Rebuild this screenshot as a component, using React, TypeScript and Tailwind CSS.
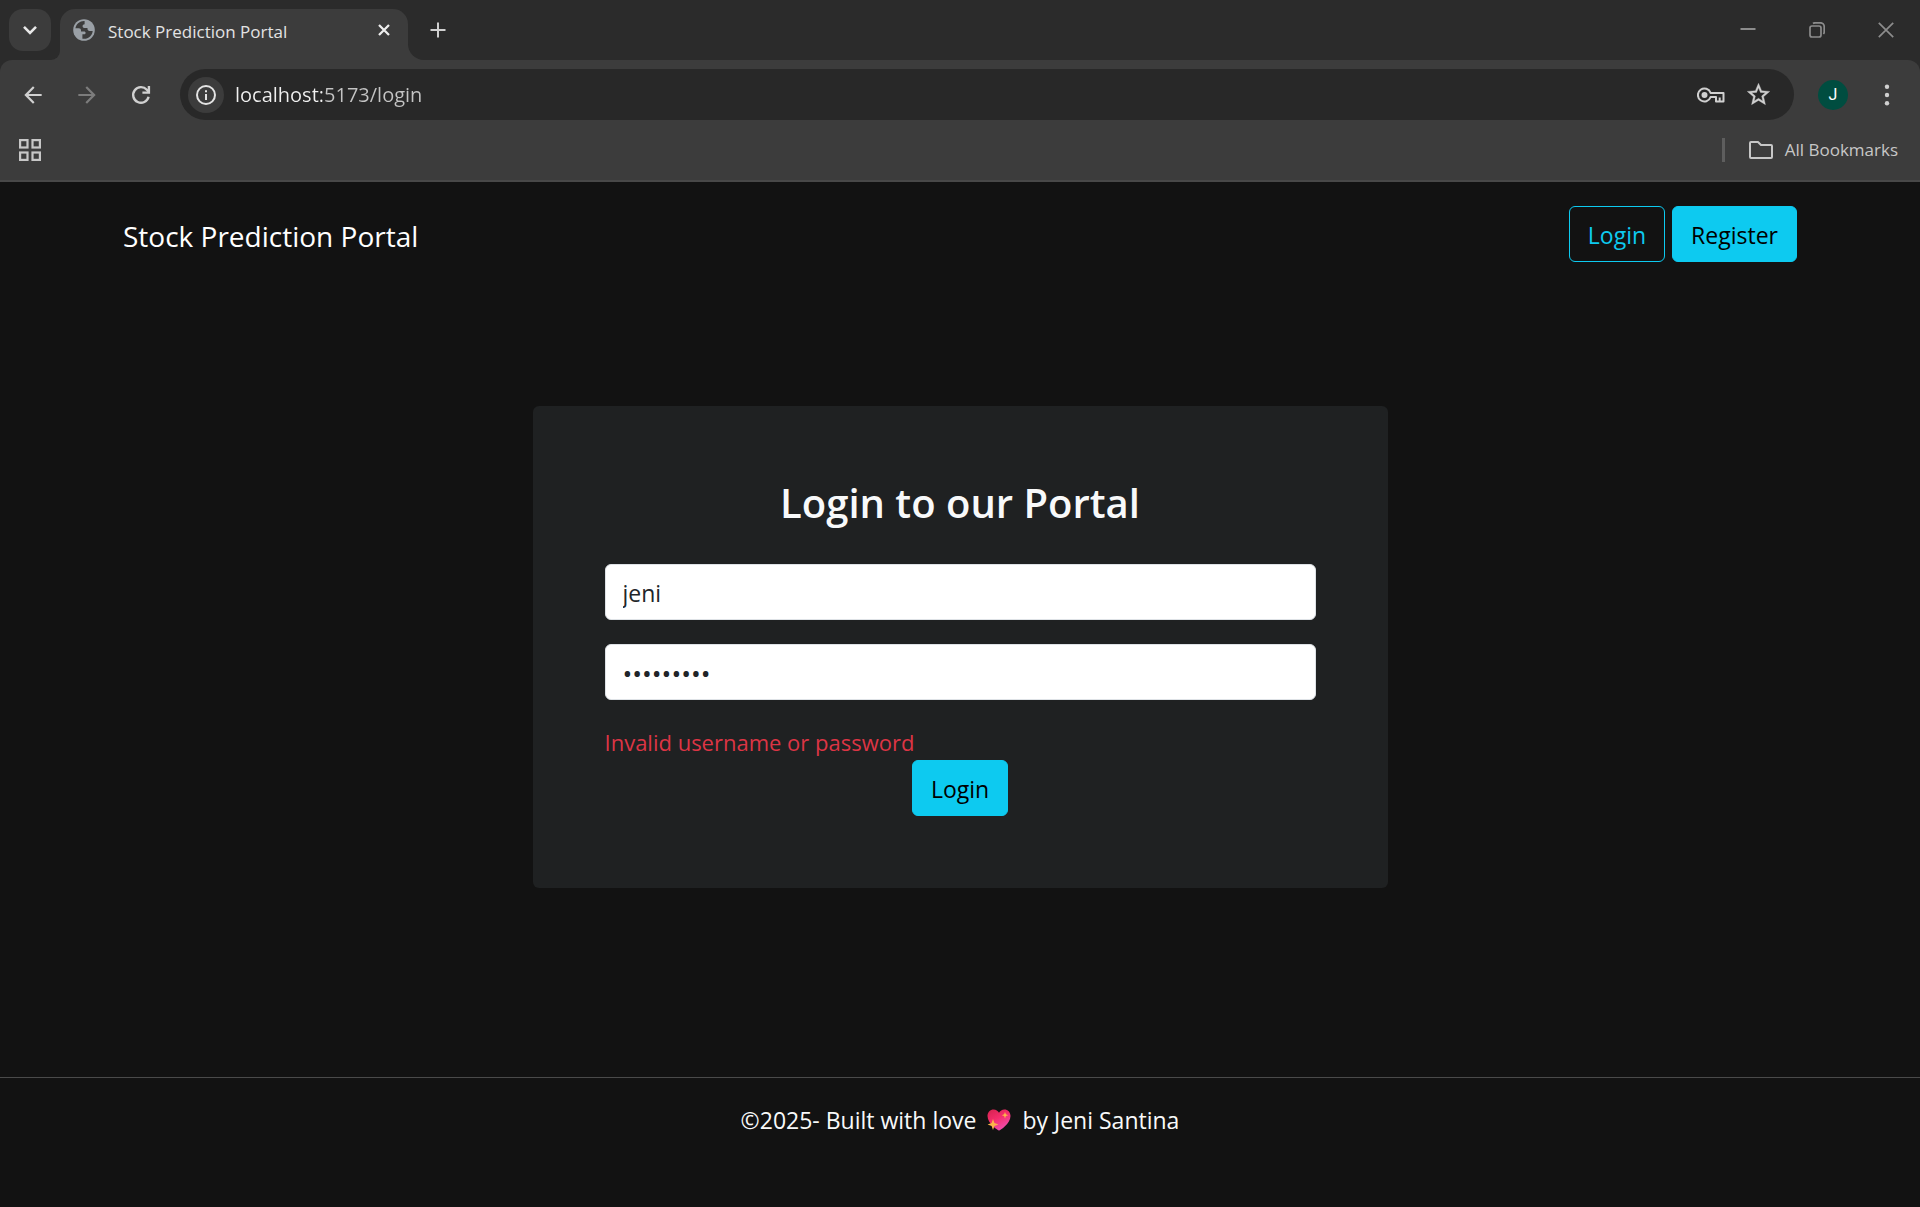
import React from "react";

type IconProps = { className?: string };

function ChevronDownIcon({ className }: IconProps) {
  return (
    <svg viewBox="0 0 24 24" className={className} fill="none" stroke="currentColor" strokeWidth="2.6">
      <path d="M6 8.8l6 6 6-6" />
    </svg>
  );
}

function GlobeIcon({ className }: IconProps) {
  return (
    <svg viewBox="0 0 22 22" className={className}>
      <circle cx="11" cy="11" r="10.8" fill="#9aa0a6" />
      <path
        d="M11.6 2c-4.500-.3-8.300 2.700-9.200 7.200h3.400c1.400 0 2.200.8 2.200 2v1.200h3.200c.9 0 1.400.6 1.400 1.400 0 1-.7 1.500-1.600 1.500H9.400v4.400c5.400 1 10-2.900 10.300-7.700h-3.300c-1.100 0-1.900-.8-1.900-1.900V8.900h-3.200c-1 0-1.700-.7-1.700-1.700 0-1.200.9-1.900 2-1.900V2z"
        fill="#3c3c3c"
      />
    </svg>
  );
}

function CloseIcon({ className }: IconProps) {
  return (
    <svg viewBox="0 0 24 24" className={className} fill="none" stroke="currentColor" strokeWidth="3.4">
      <path d="M4.500 4.500l15 15M19.500 4.500l-15 15" />
    </svg>
  );
}

function PlusIcon({ className }: IconProps) {
  return (
    <svg viewBox="0 0 16 16" className={className} fill="none" stroke="currentColor" strokeWidth="2">
      <path d="M8 0.500v15M0.500 8h15" />
    </svg>
  );
}

function MinimizeIcon({ className }: IconProps) {
  return (
    <svg viewBox="0 0 16 16" className={className} stroke="currentColor" strokeWidth="2">
      <path d="M0.500 7h15" />
    </svg>
  );
}

function RestoreIcon({ className }: IconProps) {
  return (
    <svg viewBox="0 0 16 16" className={className} fill="none" stroke="currentColor" strokeWidth="1.700">
      <rect x="1" y="4" width="11" height="11" rx="2" />
      <path d="M4 1.500c.6-.5 1.200-.7 2-.7h5.500a3.700 3.700 0 0 1 3.700 3.700V10c0 .8-.3 1.500-.8 2" />
    </svg>
  );
}

function WindowCloseIcon({ className }: IconProps) {
  return (
    <svg viewBox="0 0 16 16" className={className} fill="none" stroke="currentColor" strokeWidth="1.700">
      <path d="M.8.8l14.400 14.400M15.200.8L.8 15.200" />
    </svg>
  );
}

function ArrowIcon({ className }: IconProps) {
  return (
    <svg viewBox="0 0 24 24" className={className} fill="currentColor">
      <path d="M20 11H7.830l5.590-5.590L12 4l-8 8 8 8 1.410-1.410L7.830 13H20v-2z" />
    </svg>
  );
}

function ReloadIcon({ className }: IconProps) {
  return (
    <svg viewBox="0 0 24 24" className={className} fill="none" stroke="currentColor" strokeWidth="2.200">
      <path d="M19 13.600A7.200 7.200 0 1 1 17.400 7.200L18.800 8.800" />
      <path d="M19.300 3.800v6h-6" />
    </svg>
  );
}

function InfoIcon({ className }: IconProps) {
  return (
    <svg viewBox="0 0 20 20" className={className} fill="none" stroke="currentColor" strokeWidth="2">
      <circle cx="10" cy="10" r="9" />
      <path d="M10 9v6M10 5.200v2" />
    </svg>
  );
}

function KeyIcon({ className }: IconProps) {
  return (
    <svg viewBox="0 0 28 16" className={className} fill="none" stroke="currentColor" strokeWidth="2">
      <path d="M13.600 6A6.500 6.500 0 1 0 13.600 10H19v4.500h7.500V6z" strokeLinejoin="round" />
      <path d="M22.700 10.500v3.500" />
      <circle cx="7.500" cy="8" r="3" fill="currentColor" stroke="none" />
    </svg>
  );
}

function StarIcon({ className }: IconProps) {
  return (
    <svg viewBox="0 0 24 24" className={className} fill="currentColor" stroke="currentColor" strokeWidth="0.300">
      <path d="M22 9.240l-7.190-.62L12 2 9.190 8.630 2 9.240l5.460 4.730L5.820 21 12 17.270 18.180 21l-1.630-7.030L22 9.240zM12 15.400l-3.760 2.270 1-4.280-3.320-2.880 4.380-.38L12 6.100l1.710 4.040 4.380.38-3.320 2.880 1 4.280L12 15.400z" />
    </svg>
  );
}

function MoreIcon({ className }: IconProps) {
  return (
    <svg viewBox="0 0 24 24" className={className} fill="currentColor">
      <circle cx="12" cy="3.800" r="2.200" />
      <circle cx="12" cy="12" r="2.200" />
      <circle cx="12" cy="20.200" r="2.200" />
    </svg>
  );
}

function AppsIcon({ className }: IconProps) {
  return (
    <svg viewBox="0 0 22 22" className={className} fill="none" stroke="currentColor" strokeWidth="2.200">
      <rect x="1.100" y="1.100" width="7.400" height="7.400" />
      <rect x="13.500" y="1.100" width="7.400" height="7.400" />
      <rect x="1.100" y="13.500" width="7.400" height="7.400" />
      <rect x="13.500" y="13.500" width="7.400" height="7.400" />
    </svg>
  );
}

function FolderIcon({ className }: IconProps) {
  return (
    <svg viewBox="0 0 24 18" className={className} fill="none" stroke="currentColor" strokeWidth="2" strokeLinejoin="round">
      <path d="M1 2a1 1 0 0 1 1-1h7l3 3h10a1 1 0 0 1 1 1v11a1 1 0 0 1-1 1H2a1 1 0 0 1-1-1z" />
    </svg>
  );
}

function SparklingHeart({ className }: IconProps) {
  return (
    <svg viewBox="0 0 24 22" className={className} role="img" aria-label="sparkling heart">
      <defs>
        <linearGradient id="heart" x1="0" y1="0" x2="0.600" y2="1">
          <stop offset="0" stopColor="#d4224e" />
          <stop offset="0.500" stopColor="#f52d6c" />
          <stop offset="1" stopColor="#f04fb0" />
        </linearGradient>
      </defs>
      <path
        d="M12 21.500c-1 0-11.500-7-11.500-14.500C.5 3.200 3.300.5 6.600.5 9 .5 11 1.800 12 3.700 13 1.800 15 .5 17.400.5c3.300 0 6.100 2.700 6.100 6.500C23.500 14.500 13 21.500 12 21.500z"
        fill="url(#heart)"
      />
      <path d="M6 10l1.400 4 4 1.500-4 1.500L6 21l-1.400-4-4-1.500 4-1.500z" fill="#fcb34a" />
      <path d="M18 3l.9 2.300 2.300.9-2.300.9L18 9.400l-.9-2.300-2.300-.9 2.300-.9z" fill="#fcb34a" />
    </svg>
  );
}

function TabStrip() {
  return (
    <div className="flex h-[60px] items-start bg-[#2b2b2b] px-[9px] pt-[9px]">
      <button
        aria-label="Search tabs"
        className="flex size-[42px] items-center justify-center rounded-[14px] bg-[#3c3c3c] text-[#e8e8e8]"
      >
        <ChevronDownIcon className="size-6" />
      </button>
      <div className="flex h-[51px] items-end">
        <div className="h-4 w-[9px] overflow-hidden bg-[#3c3c3c]">
          <div className="h-4 rounded-br-2xl bg-[#2b2b2b]" />
        </div>
        <div className="flex h-[51px] w-[348px] items-start rounded-t-[15px] bg-[#3c3c3c] px-[13px]">
          <GlobeIcon className="mt-[10px] size-[22px]" />
          <span className="mt-[11px] ml-[13px] flex-1 text-[17px] leading-6 text-[#e3e3e3]">Stock Prediction Portal</span>
          <button aria-label="Close tab" className="mt-[13px] mr-[3px] text-[#eeeeee]">
            <CloseIcon className="size-4" />
          </button>
        </div>
        <div className="h-4 w-4 overflow-hidden bg-[#3c3c3c]">
          <div className="h-4 rounded-bl-2xl bg-[#2b2b2b]" />
        </div>
      </div>
      <button aria-label="New tab" className="mt-[13px] ml-[6px] text-[#d0d0d0]">
        <PlusIcon className="size-4" />
      </button>
      <div className="mt-[13px] mr-[17px] ml-auto flex gap-[53px] text-[#8c8c8c]">
        <button aria-label="Minimize">
          <MinimizeIcon className="size-4" />
        </button>
        <button aria-label="Restore">
          <RestoreIcon className="size-4" />
        </button>
        <button aria-label="Close window">
          <WindowCloseIcon className="size-4" />
        </button>
      </div>
    </div>
  );
}

function Toolbar() {
  return (
    <div className="bg-[#2b2b2b]">
      <div className="flex h-[69px] items-center rounded-t-xl bg-[#3c3c3c] pr-[21px] pl-5 text-[#d0d0d0]">
        <div className="flex items-center gap-7">
          <button aria-label="Back">
            <ArrowIcon className="size-[26px]" />
          </button>
          <button aria-label="Forward" disabled className="text-[#7c7c7c]">
            <ArrowIcon className="size-[26px] rotate-180" />
          </button>
          <button aria-label="Reload">
            <ReloadIcon className="size-[26px]" />
          </button>
        </div>
        <div className="ml-[26px] flex h-[51px] flex-1 items-center rounded-full bg-[#282828] pr-[22px] pl-2">
          <button
            aria-label="Site information"
            className="flex size-9 items-center justify-center rounded-full bg-[#3c3c3c] text-[#e3e3e3]"
          >
            <InfoIcon className="size-5" />
          </button>
          {/* The host part of the address is brighter than the rest */}
          <input
            aria-label="Address"
            defaultValue="localhost:5173/login"
            className="ml-[11px] min-w-0 flex-1 bg-[linear-gradient(90deg,#f1f1f1_87px,#c4c4c4_87px)] bg-clip-text text-[20px] leading-7 text-transparent outline-none"
          />
          <button aria-label="Saved passwords">
            <KeyIcon className="h-4 w-7" />
          </button>
          <button aria-label="Bookmark this page" className="ml-5">
            <StarIcon className="size-[27px]" />
          </button>
        </div>
        <button
          aria-label="Profile"
          className="ml-6 flex size-[30px] items-center justify-center rounded-full bg-[#004d40] font-[Roboto,sans-serif] text-[16px] text-white"
        >
          J
        </button>
        <button aria-label="Menu" className="ml-[27px]">
          <MoreIcon className="size-6" />
        </button>
      </div>
    </div>
  );
}

function BookmarksBar() {
  return (
    <div className="flex h-[53px] items-center border-b-2 border-[#484848] bg-[#3c3c3c] pr-[22px] pb-[10px] pl-[19px] text-[#c7c7c7]">
      <button aria-label="Apps">
        <AppsIcon className="size-[22px]" />
      </button>
      <div className="ml-auto flex items-center">
        <div className="h-6 w-[3px] bg-[#5e5e5e]" />
        <button className="ml-6 flex items-center gap-3 text-[17px] leading-6">
          <FolderIcon className="h-[18px] w-6" />
          All Bookmarks
        </button>
      </div>
    </div>
  );
}

export default function App() {
  return (
    <div className="flex min-h-screen flex-col bg-[#121212] font-['Open_Sans','Noto_Sans',sans-serif] text-[23px] leading-9 text-[#f8f9fa]">
      <header>
        <TabStrip />
        <Toolbar />
        <BookmarksBar />
      </header>
      <nav className="mx-auto flex w-full max-w-[1710px] items-center justify-between px-[18px] py-6">
        <a href="#home" className="pt-1 text-[28px] text-white">
          Stock Prediction Portal
        </a>
        <div className="flex gap-[7px]">
          <a href="#login" className="rounded-md border border-[#0dcaf0] px-[18px] pt-[10px] pb-2 text-[#0dcaf0]">
            Login
          </a>
          <a
            href="#register"
            className="rounded-md border border-[#0dcaf0] bg-[#0dcaf0] px-[18px] pt-[10px] pb-2 text-black"
          >
            Register
          </a>
        </div>
      </nav>
      <main className="mx-auto w-full max-w-[1710px] flex-1 pt-[120px] pb-24">
        <div className="mx-auto w-1/2 rounded-md bg-[#1f2122] p-18">
          <h3 className="mb-9 text-center text-[40px] leading-[50px] font-semibold">Login to our Portal</h3>
          <form>
            <input
              aria-label="Username"
              defaultValue="jeni"
              className="mb-6 block h-14 w-full rounded-md border border-[#dee2e6] bg-white px-[17px] pt-[2px] text-[#212529]"
            />
            <input
              aria-label="Password"
              type="password"
              defaultValue="jenipass1"
              className="mb-6 block h-14 w-full rounded-md border border-[#dee2e6] bg-white px-[17px] pt-[2px] text-[26px] text-[#212529]"
            />
            <div className="text-[22px] text-[#dc3545]">Invalid username or password</div>
            <button
              type="button"
              className="mx-auto block rounded-md border border-[#0dcaf0] bg-[#0dcaf0] px-[18px] pt-[10px] pb-2 text-black"
            >
              Login
            </button>
          </form>
        </div>
      </main>
      <footer className="flex items-center justify-center border-t border-[#4a4a4a] pt-6 pb-[69px]">
        <span>©2025- Built with love</span>
        <SparklingHeart className="mx-[11px] h-[22px] w-6" />
        <span>by Jeni Santina</span>
      </footer>
    </div>
  );
}
